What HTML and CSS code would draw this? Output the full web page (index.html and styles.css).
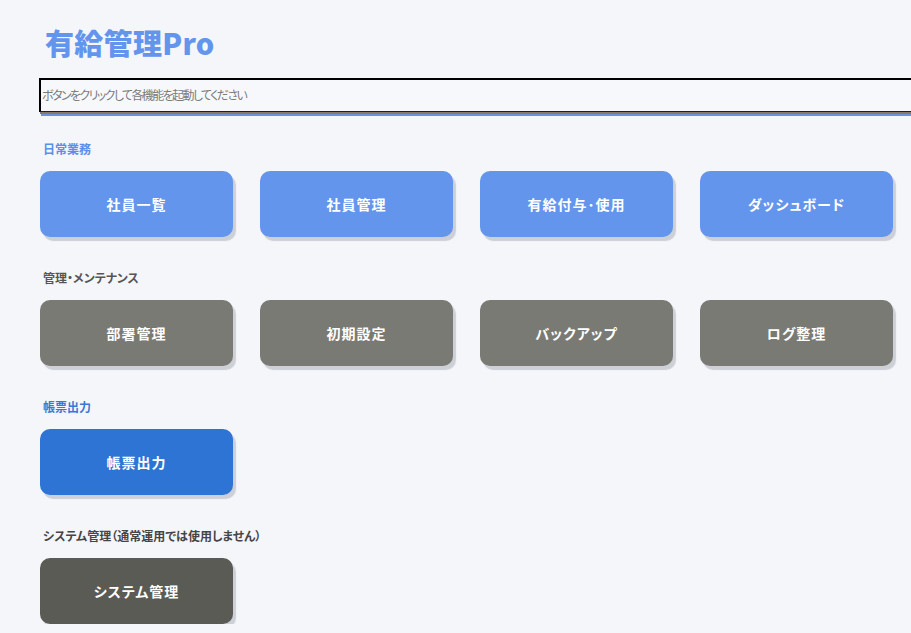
FILE: index.html
```html
<!DOCTYPE html>
<html lang="ja">
<head>
<meta charset="utf-8">
<title>有給管理Pro</title>
<link rel="stylesheet" href="styles.css">
</head>
<body>
<main class="app">
  <h1 class="title">有給管理Pro</h1>
  <div class="status-wrap">
    <input class="status" type="text" placeholder="ボタンをクリックして各機能を起動してください">
  </div>

  <section class="section">
    <h2 class="label label-daily">日常業務</h2>
    <div class="grid">
      <button class="btn btn-blue">社員一覧</button>
      <button class="btn btn-blue">社員管理</button>
      <button class="btn btn-blue">有給付与･使用</button>
      <button class="btn btn-blue">ダッシュボード</button>
    </div>
  </section>

  <section class="section">
    <h2 class="label label-maint">管理・メンテナンス</h2>
    <div class="grid">
      <button class="btn btn-grey">部署管理</button>
      <button class="btn btn-grey">初期設定</button>
      <button class="btn btn-grey">バックアップ</button>
      <button class="btn btn-grey">ログ整理</button>
    </div>
  </section>

  <section class="section">
    <h2 class="label label-report">帳票出力</h2>
    <div class="grid">
      <button class="btn btn-report">帳票出力</button>
    </div>
  </section>

  <section class="section">
    <h2 class="label label-system">システム管理（通常運用では使用しません）</h2>
    <div class="grid">
      <button class="btn btn-system">システム管理</button>
    </div>
  </section>
</main>
</body>
</html>
```
FILE: styles.css
```css
html, body {
  margin: 0;
  padding: 0;
  background: #f5f6fa;
  overflow: hidden;
}
body {
  font-family: "Noto Sans CJK JP", "Noto Sans", "Liberation Sans", sans-serif;
  font-feature-settings: "palt";
}
.app {
  padding: 25px 0 0 40px;
}
.title {
  margin: 0 0 19px 5px;
  font-size: 29px;
  line-height: 34px;
  font-weight: 900;
  color: #6495ed;
  letter-spacing: 0.3px;
}
.status-wrap {
  margin-left: -1px;
  width: calc(100% + 1px);
  box-shadow: 1px 2px 0 #857a68, 2px 4px 0 #6c93d8;
}
.status {
  display: block;
  box-sizing: border-box;
  width: 100%;
  height: 34px;
  margin: 0;
  padding: 0 0 2px 1px;
  border: 2px solid #000;
  border-bottom: 1px solid #2b1c12;
  border-right: none;
  background: #f7f8fb;
  font-family: "Noto Sans CJK JP", sans-serif;
  font-feature-settings: "palt";
  font-size: 12px;
  letter-spacing: -1.6px;
  outline: none;
}
.status::placeholder {
  color: #7b7b7b;
}
.section {
  margin-top: 29px;
}
.section + .section {
  margin-top: 33px;
}
.label {
  margin: 0 0 14px 3px;
  font-size: 12px;
  line-height: 16px;
  font-weight: 700;
  letter-spacing: 0;
}
.label-daily { color: #5b8fe6; }
.label-maint { color: #555555; }
.label-report { color: #3a78d5; }
.label-system { color: #454545; }
.grid {
  display: grid;
  grid-template-columns: repeat(4, 193px);
  column-gap: 27px;
}
.btn {
  height: 66px;
  border: none;
  border-radius: 10px;
  color: #ffffff;
  font-family: "Noto Sans CJK JP", sans-serif;
  font-feature-settings: "palt";
  font-size: 14px;
  font-weight: 700;
  letter-spacing: 1px;
  box-shadow: 3px 4px 1px #cdd0d6;
  cursor: pointer;
}
.btn-blue { background: #6495ed; }
.btn-grey { background: #7a7a74; }
.btn-report { background: #2e74d4; }
.btn-system { background: #5b5b56; }
```
